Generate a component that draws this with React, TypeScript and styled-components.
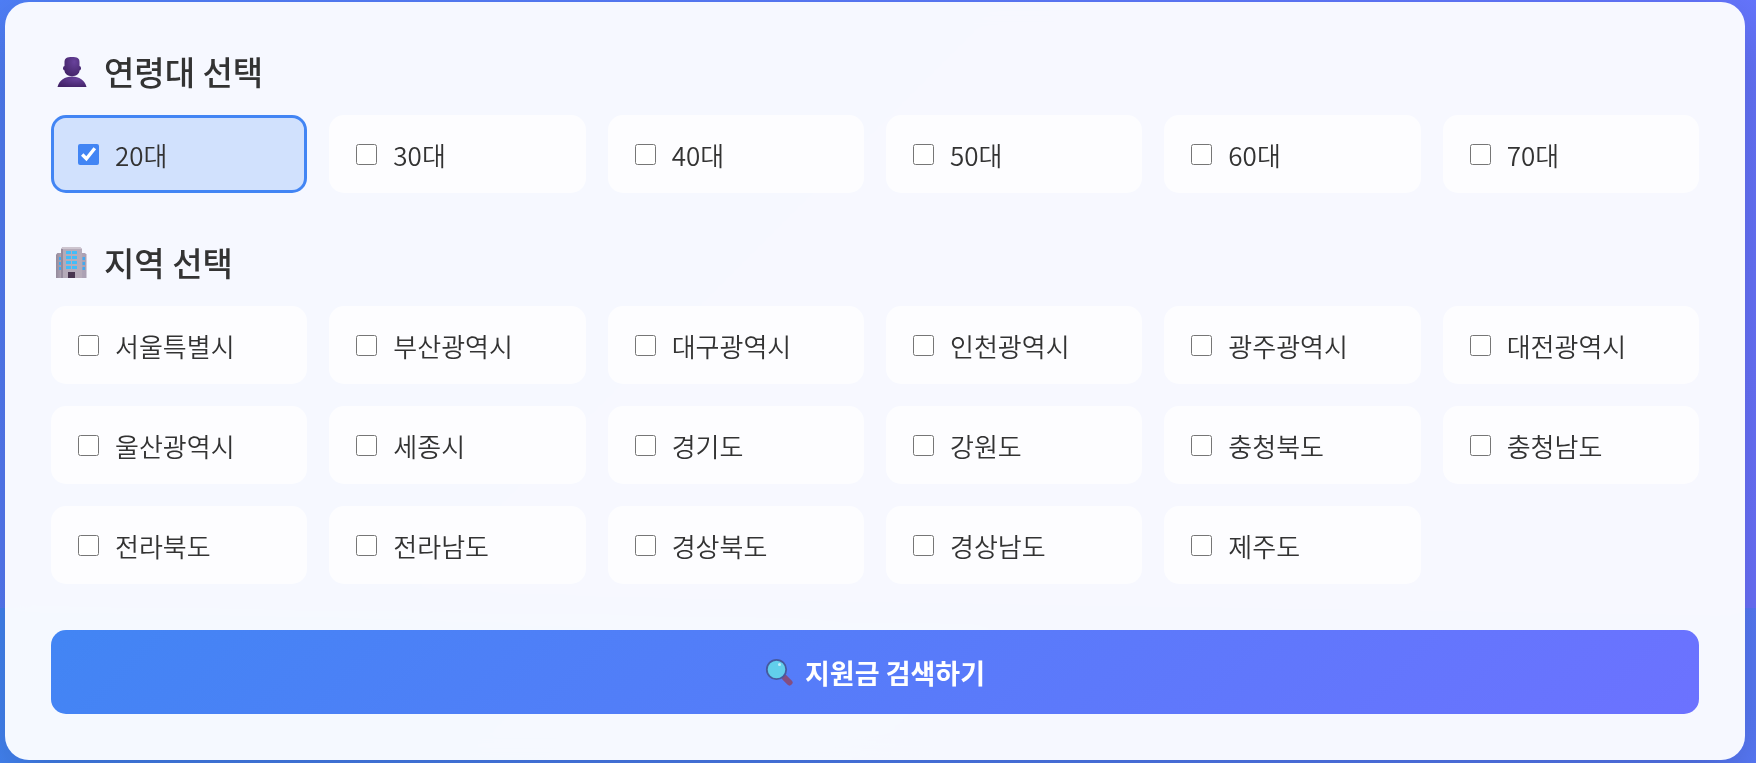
import React, { useState } from 'react';
import styled, { createGlobalStyle } from 'styled-components';

const GlobalStyle = createGlobalStyle`
  * { box-sizing: border-box; }
  body {
    margin: 0;
    color: #333;
    font-family: "Noto Sans CJK KR", "Noto Sans", sans-serif;
    background-color: #4285f4;
    background-image: linear-gradient(135deg, #4285f4 0%, #6c72ff 100%);
    background-size: 100% 1700px;
    background-position: 0 608px;
  }
`;

const Page = styled.main`
  padding: 2px 11px 3px 5px;
`;

const Card = styled.form`
  display: flex;
  flex-direction: column;
  gap: 46px;
  padding: 46px;
  border-radius: 24px;
  background: rgba(255, 255, 255, 0.95);
  box-shadow: 0 20px 60px rgba(0, 0, 0, 0.2);
  backdrop-filter: blur(10px);
`;

const Group = styled.fieldset`
  min-width: 0;
  margin: 0;
  padding: 0;
  border: 0;
`;

const Heading = styled.legend`
  display: flex;
  align-items: center;
  gap: 16px;
  padding: 0 5px;
  margin-bottom: 21px;
  font-size: 33px;
  font-weight: 500;
  line-height: 46px;
`;

const Options = styled.div`
  display: grid;
  grid-template-columns: repeat(6, minmax(0, 1fr));
  gap: 22px;
`;

const Option = styled.label<{ $checked: boolean }>`
  display: flex;
  align-items: center;
  gap: 16px;
  height: 78px;
  padding: 0 24px;
  border: 3px solid ${(p) => (p.$checked ? '#4285f4' : 'transparent')};
  border-radius: 15px;
  background: ${(p) => (p.$checked ? 'rgba(66, 133, 244, 0.2)' : 'rgba(255, 255, 255, 0.75)')};
  background-clip: ${(p) => (p.$checked ? 'padding-box' : 'border-box')};
  font-size: 26px;
  font-weight: 350;
  cursor: pointer;
`;

const Check = styled.input`
  width: 21px;
  height: 21px;
  margin: 0;
  accent-color: #4285f4;
`;

const SearchButton = styled.button`
  display: flex;
  align-items: center;
  justify-content: center;
  gap: 12px;
  height: 84px;
  border: 0;
  border-radius: 15px;
  background: linear-gradient(135deg, #4285f4, #6c72ff);
  color: #fff;
  font-family: inherit;
  font-size: 27px;
  font-weight: 700;
  cursor: pointer;
`;

const PersonIcon = () => (
  <svg width="32" height="32" viewBox="0 0 32 32" aria-hidden="true">
    <defs>
      <radialGradient id="head" cx="65%" cy="25%" r="80%">
        <stop offset="0" stopColor="#68429b" />
        <stop offset="1" stopColor="#432368" />
      </radialGradient>
    </defs>
    <path d="M1.500 32C3 25.500 9 21.500 16 21.500S29 25.500 30.500 32Z" fill="url(#head)" />
    <rect x="7" y="11" width="18" height="4.500" rx="2" fill="#4a2a74" />
    <path d="M8.500 7C8.500 3 11 2 16 2s7.500 1 7.500 5v8.500c0 3-3 5.700-7.500 5.700s-7.500-2.700-7.500-5.700Z" fill="url(#head)" />
  </svg>
);

const windows = [5, 10, 15, 20];

const BuildingIcon = () => (
  <svg width="32" height="32" viewBox="0 0 32 32" aria-hidden="true">
    <defs>
      <linearGradient id="wall">
        <stop offset="0" stopColor="#958b9c" />
        <stop offset=".25" stopColor="#b9afbe" />
        <stop offset="1" stopColor="#aaa0b3" />
      </linearGradient>
    </defs>
    <path d="M0 8.500 1.500 7H29L30.500 8.500V32H0Z" fill="url(#wall)" />
    <path d="M5 3 6.500 1H24L26 3V32H5Z" fill="#b5abb9" />
    <path d="M5 3 6.500 1H24L26 3Z" fill="#cdc5cf" />
    <path d="M5 3H7V32H5Z" fill="#958b9d" />
    {windows.map((y) => (
      <path key={y} d={`M10 ${y}h5v3h-5ZM16 ${y}h5v3h-5Z`} fill="#42bdf8" />
    ))}
    {[11, 16, 21].map((y) => (
      <path key={y} d={`M3 ${y}h2v3h-2ZM26.500 ${y}h2.500v3h-2.500Z`} fill="#42a9ef" />
    ))}
    <path d="M12 26h7v6h-7Z" fill="#483650" />
  </svg>
);

const SearchIcon = () => (
  <svg width="28" height="28" viewBox="0 0 28 28" aria-hidden="true">
    <path d="m17 18 2 2" stroke="#6b5177" strokeWidth="3" />
    <path d="m20 20 4.500 4.500" stroke="#844d80" strokeWidth="6" strokeLinecap="round" />
    <circle cx="11.500" cy="11.500" r="9.700" fill="#62cfeb" stroke="#465a9e" strokeWidth="1.800" />
    <circle cx="14.500" cy="6.500" r="1.500" fill="#c1effa" />
  </svg>
);

const ages = ['20대', '30대', '40대', '50대', '60대', '70대'];
const regions = [
  '서울특별시', '부산광역시', '대구광역시', '인천광역시', '광주광역시', '대전광역시',
  '울산광역시', '세종시', '경기도', '강원도', '충청북도', '충청남도',
  '전라북도', '전라남도', '경상북도', '경상남도', '제주도',
];

export default function App() {
  const [selected, setSelected] = useState<string[]>(['20대']);
  const toggle = (name: string) =>
    setSelected((s) => (s.includes(name) ? s.filter((n) => n !== name) : [...s, name]));

  const renderOptions = (names: string[]) => (
    <Options>
      {names.map((name) => (
        <Option key={name} $checked={selected.includes(name)}>
          <Check type="checkbox" checked={selected.includes(name)} onChange={() => toggle(name)} />
          {name}
        </Option>
      ))}
    </Options>
  );

  return (
    <>
      <GlobalStyle />
      <Page>
        <Card onSubmit={(e) => e.preventDefault()}>
          <Group>
            <Heading><PersonIcon />연령대 선택</Heading>
            {renderOptions(ages)}
          </Group>
          <Group>
            <Heading><BuildingIcon />지역 선택</Heading>
            {renderOptions(regions)}
          </Group>
          <SearchButton type="submit"><SearchIcon />지원금 검색하기</SearchButton>
        </Card>
      </Page>
    </>
  );
}
